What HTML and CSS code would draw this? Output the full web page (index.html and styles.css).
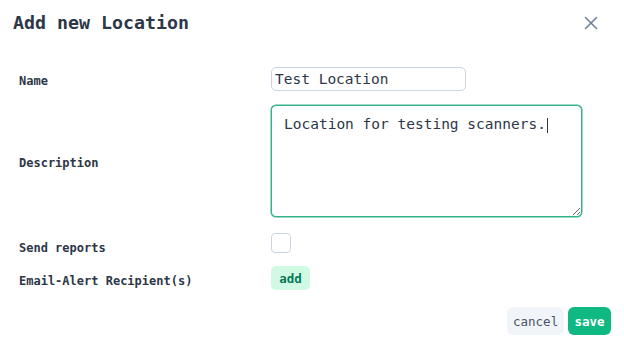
FILE: index.html
```html
<!DOCTYPE html>
<html lang="en">
<head>
  <meta charset="UTF-8" />
  <meta name="viewport" content="width=device-width, initial-scale=1.0" />
  <title>Add new Location</title>
  <link rel="stylesheet" href="styles.css">
</head>
<body>
  <div class="dialog">
    <div class="dialog-header">
      <h1>Add new Location</h1>
      <button class="close" aria-label="close">
        <svg width="14" height="14" viewBox="0 0 14 14" fill="none" stroke="#718096" stroke-width="1.6" stroke-linecap="round">
          <path d="M1.5 1.5 L12.5 12.5 M12.5 1.5 L1.5 12.5" />
        </svg>
      </button>
    </div>

    <div class="form">
      <div class="form-row row-name">
        <label for="name">Name</label>
        <input type="text" id="name" value="Test Location" />
      </div>

      <div class="form-row row-desc">
        <label for="description">Description</label>
        <div class="textarea-wrap">
          <textarea id="description">Location for testing scanners.</textarea>
          <span class="caret"></span>
        </div>
      </div>

      <div class="form-row row-reports">
        <label for="reports">Send reports</label>
        <div class="check-wrap"><span class="checkbox" id="reports"></span></div>
      </div>

      <div class="form-row row-email">
        <label>Email-Alert Recipient(s)</label>
        <div><button class="add">add</button></div>
      </div>
    </div>

    <div class="dialog-footer">
      <button class="cancel">cancel</button>
      <button class="save">save</button>
    </div>
  </div>
</body>
</html>
```

FILE: styles.css
```css
body {
  margin: 0;
  background-color: #fff;
  color: #2d3748;
  font-family: "DejaVu Sans Mono", monospace;
}

.dialog {
  width: 624px;
  height: 346px;
}

.dialog-header {
  height: 44px;
  display: flex;
  align-items: center;
  justify-content: space-between;
  padding: 0 26px 0 13px;
}

h1 {
  margin: 0;
  font-size: 18.3px;
  font-weight: bold;
  color: #2d3748;
}

.close {
  background: none;
  border: none;
  padding: 0;
  width: 14px;
  height: 14px;
  display: flex;
  margin-top: 2px;
}

.form {
  padding: 23px 0 0 19px;
}

.form-row {
  display: grid;
  grid-template-columns: 252px 1fr;
  align-items: center;
}

.form-row label {
  font-size: 12px;
  font-weight: bold;
  padding-top: 3px;
}

.row-name {
  margin-bottom: 14px;
}

.row-desc {
  margin-bottom: 16px;
}

.row-reports {
  margin-bottom: 9px;
}

.row-reports label {
  padding-top: 6px;
}

.row-email label {
  padding-top: 5px;
}

input[type="text"] {
  width: 195px;
  height: 24px;
  box-sizing: border-box;
  border: 1px solid #cbd5e0;
  border-radius: 5px;
  padding: 0 3px;
  font-family: "DejaVu Sans Mono", monospace;
  font-size: 14.5px;
  color: #2d3748;
}

.textarea-wrap {
  position: relative;
  width: 311px;
}

textarea {
  width: 311px;
  height: 112px;
  box-sizing: border-box;
  border: 1px solid #34b38a;
  box-shadow: 0 0 0 0.5px #34b38a;
  border-radius: 5px;
  padding: 10px 12px 8px;
  font-family: "DejaVu Sans Mono", monospace;
  font-size: 14.5px;
  color: #2d3748;
  outline: none;
  display: block;
}

.caret {
  position: absolute;
  left: 276px;
  top: 13px;
  width: 1px;
  height: 15px;
  background-color: #2d3748;
}

.check-wrap {
  height: 24px;
}

.checkbox {
  display: block;
  width: 20px;
  height: 20px;
  box-sizing: border-box;
  border: 1px solid #cbd5e0;
  border-radius: 4px;
}

button {
  font-family: "DejaVu Sans Mono", monospace;
  cursor: pointer;
}

.add {
  height: 24px;
  width: 39px;
  padding: 0;
  border: none;
  border-radius: 5px;
  background-color: #d1fae5;
  color: #047857;
  font-size: 12.5px;
  font-weight: bold;
}

.dialog-footer {
  display: flex;
  justify-content: flex-end;
  gap: 4px;
  margin-top: 17px;
  padding-right: 13px;
}

.cancel,
.save {
  height: 28px;
  border: none;
  border-radius: 6px;
  font-size: 12.5px;
  padding: 0 6px;
}

.cancel {
  width: 57px;
  background-color: #f1f5f9;
  color: #4a5568;
}

.save {
  width: 43px;
  background-color: #10b981;
  color: #fff;
  font-weight: bold;
}
```
